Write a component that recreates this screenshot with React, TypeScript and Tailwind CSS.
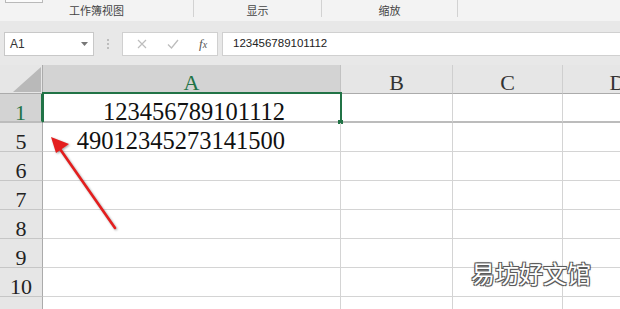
import React from 'react';

const serif = "font-['Liberation_Serif','Times_New_Roman',serif]";
const cjk = "font-['Noto_Sans_CJK_SC','Noto_Sans',sans-serif]";

const rows = [
  { n: '1', value: '123456789101112', active: true },
  { n: '5', value: '49012345273141500' },
  { n: '6' },
  { n: '7' },
  { n: '8' },
  { n: '9' },
  { n: '10' },
  { n: '11' },
];

function Ribbon() {
  return (
    <div className={`h-[21px] bg-[#f3f3f3] flex text-[11px] text-[#444] ${cjk}`}>
      <div className="w-[193px] relative flex justify-center pt-[3px] leading-[14px]">
        {/* bottom edge of a button above */}
        <div className="absolute left-[5px] top-0 w-[38px] h-[3px] border border-t-0 border-[#b9b9b9] bg-[#fbfbfb]" />
        工作簿视图
      </div>
      <div className="w-px h-[17px] bg-[#d2d2d2]" />
      <div className="w-[127px] flex justify-center pt-[3px] leading-[14px]">显示</div>
      <div className="w-px h-[17px] bg-[#d2d2d2]" />
      <div className="w-[135px] flex justify-center pt-[3px] leading-[14px]">缩放</div>
      <div className="w-px h-[17px] bg-[#d2d2d2]" />
      <div className="flex-1" />
    </div>
  );
}

function FormulaBar() {
  return (
    <div className="h-[44px] bg-[#e8e8e8] pt-[11px] pl-[4px] flex items-start font-['Liberation_Sans',Arial,sans-serif]">
      <div className="w-[90px] h-[24px] bg-white border border-[#c8c8c8] flex items-center justify-between pl-[5px] pr-[5px] text-[12px] text-[#333]">
        <span>A1</span>
        <svg width="7" height="4" viewBox="0 0 7 4">
          <path d="M0 0h7L3.5 4z" fill="#777" />
        </svg>
      </div>
      <div className="w-[28px] h-[24px] flex flex-col items-center justify-center gap-[2px]">
        <span className="w-[2px] h-[2px] bg-[#bdbdbd]" />
        <span className="w-[2px] h-[2px] bg-[#bdbdbd]" />
        <span className="w-[2px] h-[2px] bg-[#bdbdbd]" />
      </div>
      <div className="w-[96px] h-[24px] bg-white border border-[#d0d0d0] flex items-center">
        <svg width="10" height="10" viewBox="0 0 10 10" className="ml-[14px]">
          <path d="M1 1l8 8M9 1l-8 8" stroke="#bdbdbd" strokeWidth="1.2" />
        </svg>
        <svg width="12" height="10" viewBox="0 0 12 10" className="ml-[20px]">
          <path d="M1 5.5l3.5 3.5L11 1" stroke="#bdbdbd" strokeWidth="1.3" fill="none" />
        </svg>
        <span className={`ml-[20px] italic text-[13px] text-[#555] ${serif}`}>
          f<span className="text-[10px]">x</span>
        </span>
      </div>
      <div className="w-[4px]" />
      <div className="flex-1 h-[24px] bg-white border border-[#d0d0d0] border-r-0 flex items-center pl-[10px] text-[11.5px] text-[#222]">
        123456789101112
      </div>
    </div>
  );
}

function HeaderRow() {
  const cols = ['B', 'C', 'D'];
  return (
    <div className={`h-[29px] flex bg-[#e6e6e6] ${serif} text-[22px] leading-none`}>
      <div className="w-[43px] shrink-0 border-r border-b border-[#ababab] relative">
        <svg width="28" height="25" viewBox="0 0 28 25" className="absolute right-[1px] bottom-[1px]">
          <path d="M0 25L28 0V25z" fill="#b9b9b9" />
        </svg>
      </div>
      <div className="w-[298px] shrink-0 bg-[#d3d3d3] border-r border-[#c2c2c2] border-b-2 border-b-[#217346] flex justify-center pt-[7px] text-[#217346]">
        A
      </div>
      {cols.map((c) => (
        <div
          key={c}
          className={`${c === 'B' ? 'w-[112px]' : 'w-[110px]'} shrink-0 border-r border-[#cfcfcf] border-b border-b-[#ababab] flex justify-center pt-[7px] text-[#333]`}
        >
          {c}
        </div>
      ))}
    </div>
  );
}

function GridRow({ n, value, active }: { n: string; value?: string; active?: boolean }) {
  const hiddenBelow = n === '1';
  const bottom = hiddenBelow ? 'border-b-2 border-b-[#bcbcbc]' : 'border-b border-b-[#d4d4d4]';
  return (
    <div className={`h-[29px] flex shrink-0 ${serif}`}>
      <div
        className={`w-[43px] shrink-0 flex justify-center pt-[8px] text-[22px] leading-none ${
          active
            ? 'bg-[#d3d3d3] text-[#217346] border-r-2 border-r-[#217346]'
            : 'bg-[#e6e6e6] text-[#222] border-r border-r-[#ababab]'
        } ${hiddenBelow ? 'border-b-2 border-b-[#bcbcbc]' : 'border-b border-b-[#c6c6c6]'}`}
      >
        {n}
      </div>
      <div className={`w-[298px] shrink-0 relative border-r border-r-[#d4d4d4] ${bottom} flex justify-end pr-[55px] pt-[6px] text-[24.5px] leading-none text-[#111]`}>
        {active && (
          <div className="absolute -top-[2px] -left-px -right-[2px] -bottom-[1px] border-t-2 border-x-2 border-[#217346]">
            <div className="absolute -right-[3px] -bottom-[2px] w-[5px] h-[4px] bg-[#217346]" />
          </div>
        )}
        {value}
      </div>
      <div className={`w-[112px] shrink-0 border-r border-r-[#d4d4d4] ${bottom}`} />
      <div className={`w-[110px] shrink-0 border-r border-r-[#d4d4d4] ${bottom}`} />
      <div className={`w-[110px] shrink-0 ${bottom}`} />
    </div>
  );
}

export default function App() {
  return (
    <div className="w-[620px] h-[309px] overflow-hidden relative bg-white">
      <Ribbon />
      <FormulaBar />
      <HeaderRow />
      {rows.map((r) => (
        <GridRow key={r.n} {...r} />
      ))}

      {/* red annotation arrow */}
      <svg
        className="absolute inset-0 pointer-events-none drop-shadow-[1px_1px_1px_rgba(0,0,0,0.35)]"
        width="620"
        height="309"
        viewBox="0 0 620 309"
      >
        <path d="M115 228L60 149" stroke="#e41e1e" strokeWidth="2.6" strokeLinecap="round" />
        <path d="M51 137L69 144L56 153z" fill="#e41e1e" />
      </svg>

      {/* watermark */}
      <div
        className={`absolute left-[471px] top-[258px] text-[24px] leading-[30px] text-white ${cjk} [text-shadow:-1px_-1px_0_#5a5a5a,1px_-1px_0_#5a5a5a,-1px_1px_0_#5a5a5a,1px_1px_0_#5a5a5a,0_0_3px_rgba(0,0,0,0.35)]`}
      >
        易坊好文馆
      </div>
    </div>
  );
}
